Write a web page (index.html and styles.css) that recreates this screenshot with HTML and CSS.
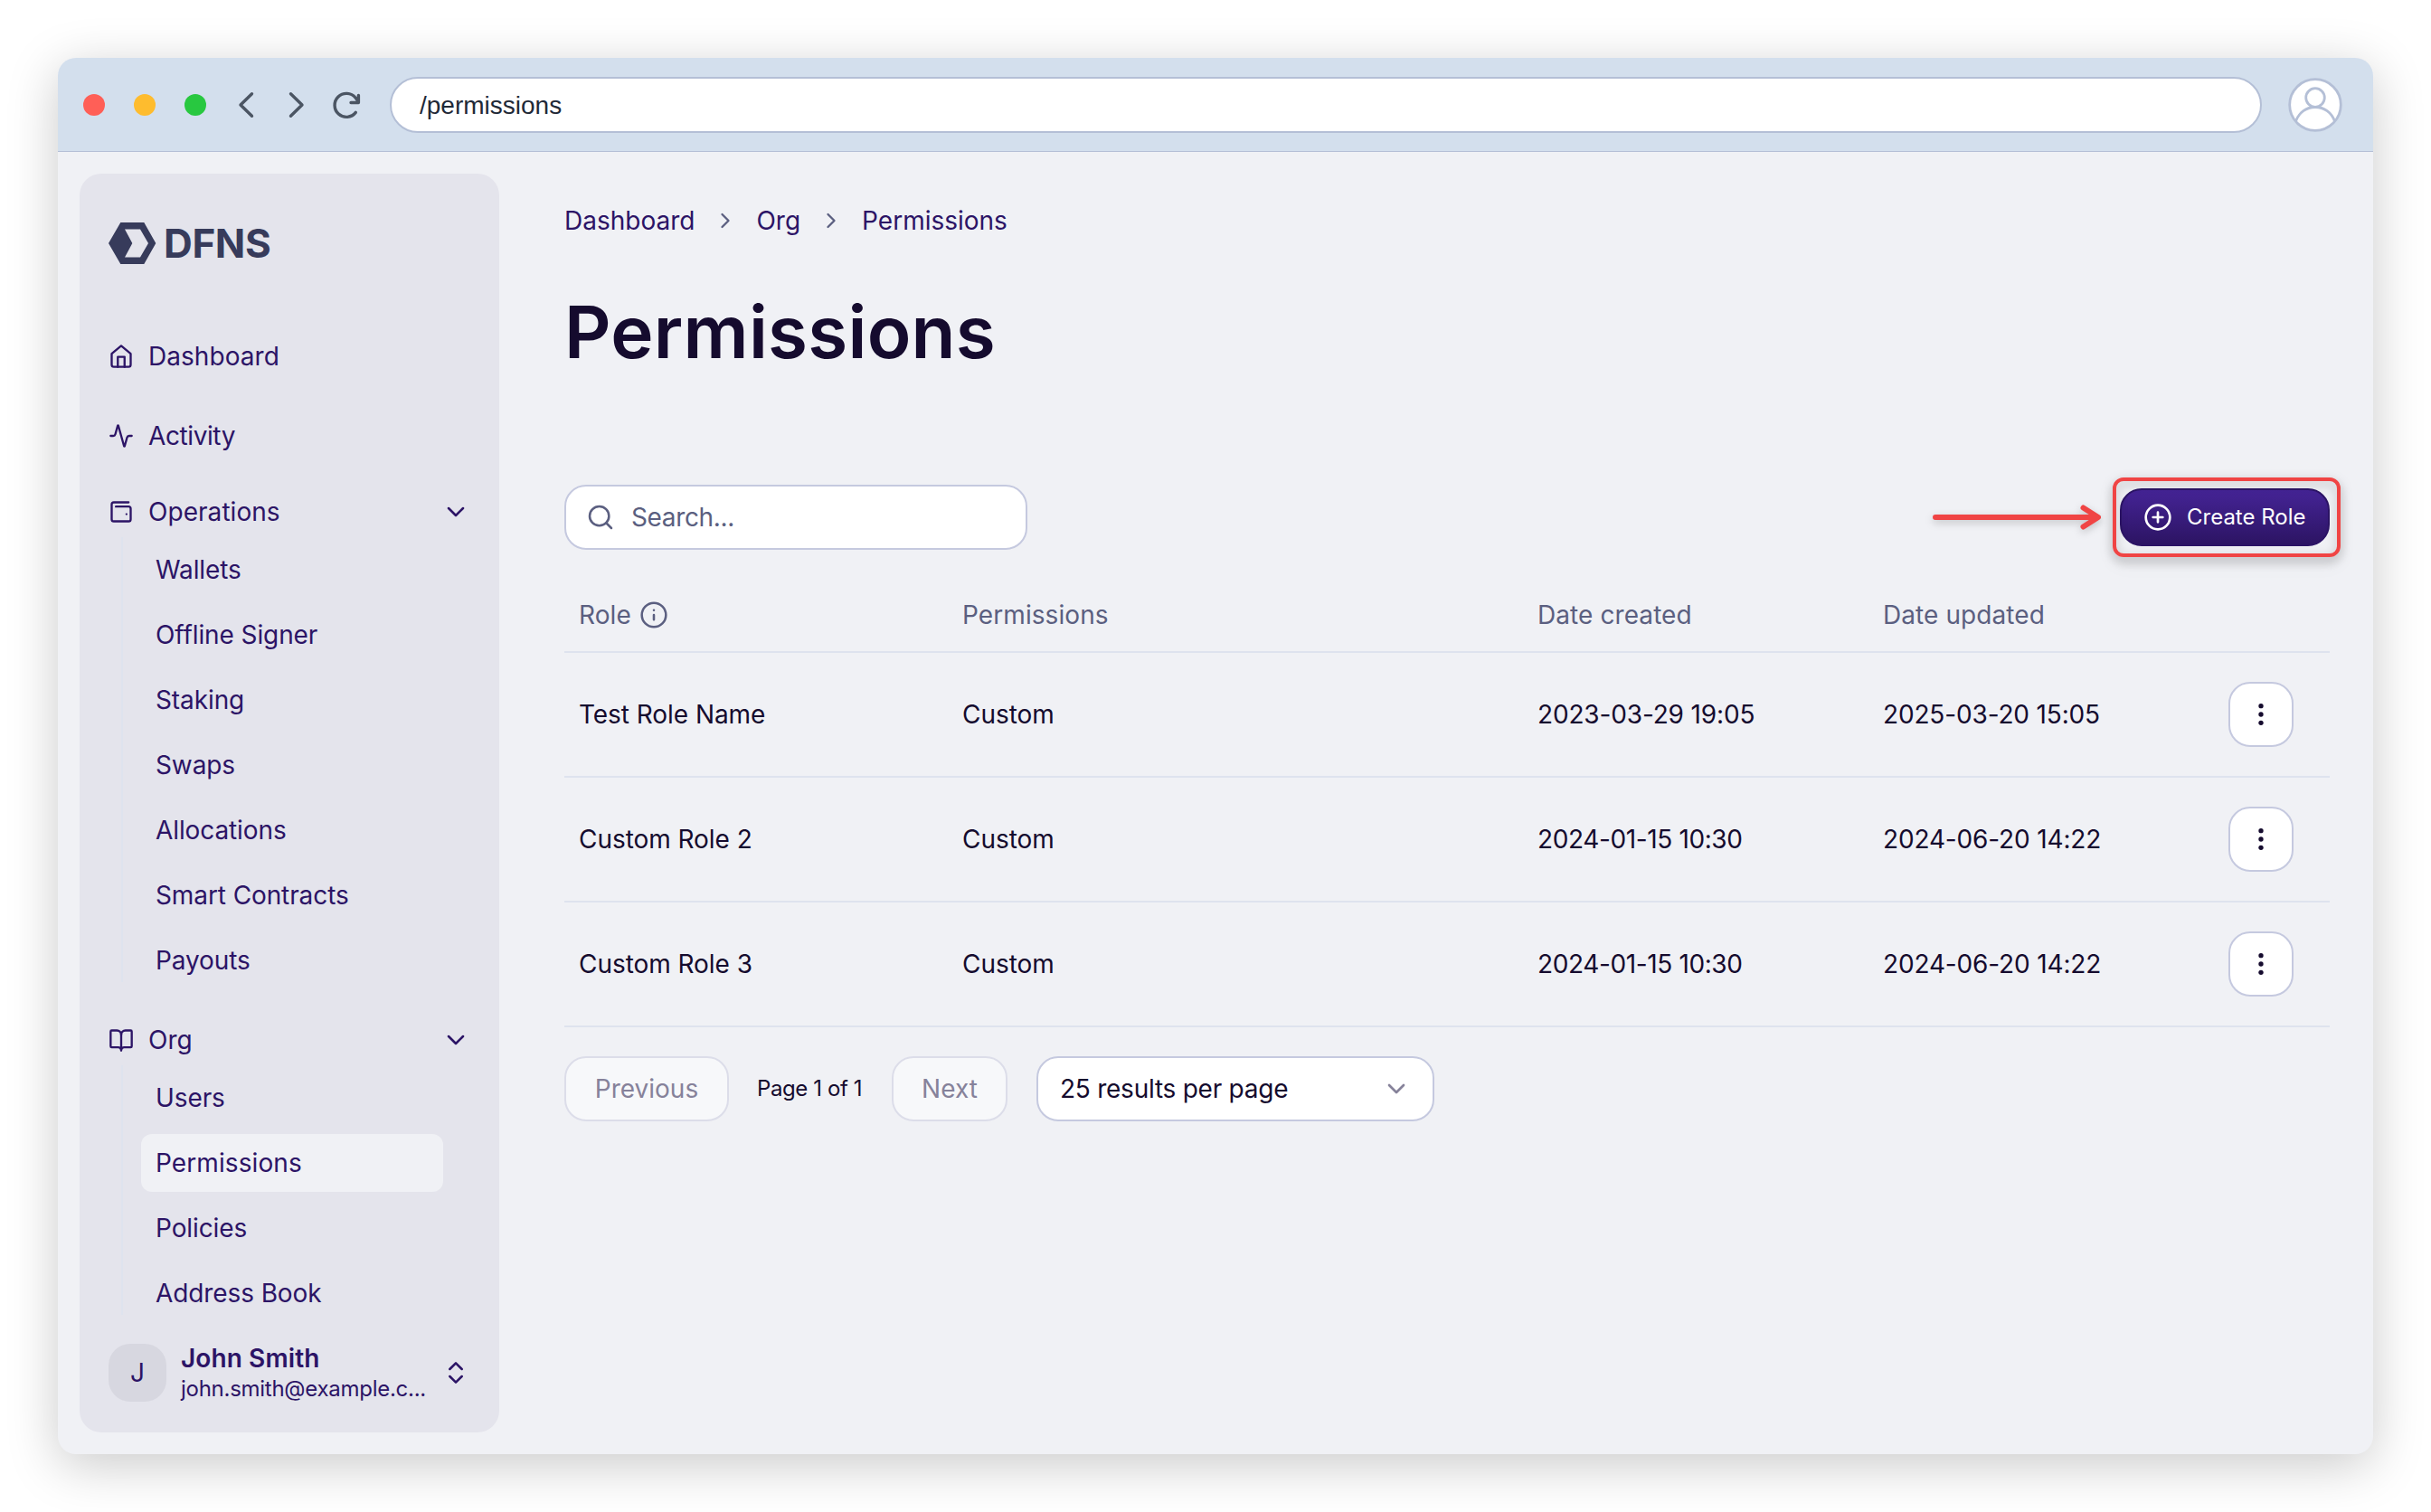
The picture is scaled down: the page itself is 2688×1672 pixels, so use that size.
FILE: index.html
```html
<!DOCTYPE html>
<html lang="en">
<head>
    <meta charset="UTF-8">
    <meta name="viewport" content="width=device-width, initial-scale=1.0">
    <title>Permissions</title>
    <link rel="stylesheet" href="styles.css">
</head>
<body>
    <div class="browser">
        <div class="browser-bar">
            <div class="dots">
                <span class="dot red"></span>
                <span class="dot yellow"></span>
                <span class="dot green"></span>
            </div>
            <div class="nav-icons">
                <svg width="32" height="32" viewBox="0 0 32 32"><path d="M22.500 3.800 10 16l12.500 12.200"/></svg>
                <svg width="32" height="32" viewBox="0 0 32 32"><path d="M9.500 3.800 22 16 9.500 28.200"/></svg>
                <svg width="32" height="32" viewBox="0 0 32 32"><path d="M25.300 24.400A13 13 0 1 1 25 8l3 4M28.400 5.500V13.500H20"/></svg>
            </div>
            <div class="url">/permissions</div>
            <svg class="profile" width="60" height="60" viewBox="0 0 60 60">
                <circle cx="30" cy="30" r="28.300"/>
                <circle cx="30" cy="22" r="10.300"/>
                <path d="M8.500 48C12 38.500 20 32.500 30 32.500S48 38.500 51.500 48"/>
            </svg>
        </div>

        <div class="app">
            <aside class="sidebar">
                <div class="logo">
                    <svg width="53" height="46" viewBox="0 0 53 46">
                        <path fill-rule="evenodd" d="M13.300 0H39.300L52.300 23 39.300 46H13.300L0 23ZM18 7.500 26.300 23 18 38.500H35L44 23 35 7.500Z"/>
                    </svg>
                    <span>DFNS</span>
                </div>

                <nav>
                    <a class="nav-item">
                        <svg class="icon" viewBox="0 0 24 24"><path d="M3 9.500 12 2l9 7.500V20a2 2 0 0 1-2 2H5a2 2 0 0 1-2-2z"/><path d="M8.800 22V12.500h6.400V22"/></svg>
                        Dashboard
                    </a>
                    <a class="nav-item activity">
                        <svg class="icon" viewBox="0 0 24 24"><path d="M22 12h-2.480a2 2 0 0 0-1.930 1.460l-2.350 8.360a.25.25 0 0 1-.48 0L9.240 2.180a.25.25 0 0 0-.48 0l-2.350 8.360A2 2 0 0 1 4.490 12H2"/></svg>
                        Activity
                    </a>
                    <a class="nav-item operations">
                        <svg class="icon" viewBox="0 0 24 24"><path d="M19 3H5a2 2 0 0 0-2 2v14a2 2 0 0 0 2 2h14a2 2 0 0 0 2-2V9a2 2 0 0 0-2-2H7"/><path d="M17 14.200h.01"/></svg>
                        Operations
                        <svg class="chevron" viewBox="0 0 24 24"><path d="m6 9 6 6 6-6"/></svg>
                    </a>
                    <ul class="submenu">
                        <li>Wallets</li>
                        <li>Offline Signer</li>
                        <li>Staking</li>
                        <li>Swaps</li>
                        <li>Allocations</li>
                        <li>Smart Contracts</li>
                        <li>Payouts</li>
                    </ul>
                    <a class="nav-item org">
                        <svg class="icon" viewBox="0 0 24 24"><path d="M12 6v16"/><path d="M3 19a1 1 0 0 1-1-1V4a1 1 0 0 1 1-1h5a4 4 0 0 1 4 4 4 4 0 0 1 4-4h5a1 1 0 0 1 1 1v14a1 1 0 0 1-1 1h-6a3 3 0 0 0-3 2 3 3 0 0 0-3-2z"/></svg>
                        Org
                        <svg class="chevron" viewBox="0 0 24 24"><path d="m6 9 6 6 6-6"/></svg>
                    </a>
                    <ul class="submenu">
                        <li>Users</li>
                        <li class="active">Permissions</li>
                        <li>Policies</li>
                        <li>Address Book</li>
                    </ul>
                </nav>

                <div class="user">
                    <div class="user-avatar">J</div>
                    <div class="user-info">
                        <div class="user-name">John Smith</div>
                        <div class="user-email">john.smith@example.c...</div>
                    </div>
                    <svg class="chevron" viewBox="0 0 24 24"><path d="m7 9 5-5 5 5M7 15l5 5 5-5"/></svg>
                </div>
            </aside>

            <main>
                <div class="breadcrumbs">
                    <span>Dashboard</span>
                    <svg viewBox="0 0 24 24"><path d="m9 18 6-6-6-6"/></svg>
                    <span>Org</span>
                    <svg viewBox="0 0 24 24"><path d="m9 18 6-6-6-6"/></svg>
                    <span>Permissions</span>
                </div>

                <h1>Permissions</h1>

                <div class="toolbar">
                    <div class="search">
                        <svg viewBox="0 0 24 24"><circle cx="11" cy="11" r="8"/><path d="m21 21-4.300-4.300"/></svg>
                        Search...
                    </div>
                    <div class="create">
                        <button class="create-btn">
                            <svg viewBox="0 0 24 24"><circle cx="12" cy="12" r="10"/><path d="M8 12h8M12 8v8"/></svg>
                            Create Role
                        </button>
                        <div class="highlight"></div>
                        <svg class="arrow" width="192" height="32" viewBox="0 0 192 32"><path d="M6 16H184M169.500 5.500 186 16 169.500 26.500"/></svg>
                    </div>
                </div>

                <table>
                    <colgroup>
                        <col class="col-role">
                        <col class="col-permissions">
                        <col class="col-date">
                        <col class="col-date">
                        <col>
                    </colgroup>
                    <thead>
                        <tr>
                            <th><div class="th-role">Role <svg viewBox="0 0 24 24"><circle cx="12" cy="12" r="10"/><path d="M12 16v-4M12 8h.01"/></svg></div></th>
                            <th>Permissions</th>
                            <th>Date created</th>
                            <th>Date updated</th>
                            <th></th>
                        </tr>
                    </thead>
                    <tbody>
                        <tr>
                            <td>Test Role Name</td>
                            <td>Custom</td>
                            <td class="date">2023-03-29 19:05</td>
                            <td class="date">2025-03-20 15:05</td>
                            <td><button class="more"><svg viewBox="0 0 24 24"><circle cx="12" cy="5" r="2"/><circle cx="12" cy="12" r="2"/><circle cx="12" cy="19" r="2"/></svg></button></td>
                        </tr>
                        <tr>
                            <td>Custom Role 2</td>
                            <td>Custom</td>
                            <td class="date tight">2024-01-15 10:30</td>
                            <td class="date">2024-06-20 14:22</td>
                            <td><button class="more"><svg viewBox="0 0 24 24"><circle cx="12" cy="5" r="2"/><circle cx="12" cy="12" r="2"/><circle cx="12" cy="19" r="2"/></svg></button></td>
                        </tr>
                        <tr>
                            <td>Custom Role 3</td>
                            <td>Custom</td>
                            <td class="date tight">2024-01-15 10:30</td>
                            <td class="date">2024-06-20 14:22</td>
                            <td><button class="more"><svg viewBox="0 0 24 24"><circle cx="12" cy="5" r="2"/><circle cx="12" cy="12" r="2"/><circle cx="12" cy="19" r="2"/></svg></button></td>
                        </tr>
                    </tbody>
                </table>

                <div class="pagination">
                    <button class="page-btn prev" disabled>Previous</button>
                    <span class="page-count">Page 1 of 1</span>
                    <button class="page-btn next" disabled>Next</button>
                    <div class="page-size">
                        25 results per page
                        <svg viewBox="0 0 24 24"><path d="m6 9 6 6 6-6"/></svg>
                    </div>
                </div>
            </main>
        </div>
    </div>
</body>
</html>
```

FILE: styles.css
```css
* {
    box-sizing: border-box;
}

body {
    margin: 0;
    padding: 64px;
    background: #fff;
    font-family: Inter, "Liberation Sans", sans-serif;
    font-size: 28px;
    line-height: 40px;
    color: #150b2e;
}

svg {
    fill: none;
    stroke: currentColor;
    stroke-linecap: round;
    stroke-linejoin: round;
    flex-shrink: 0;
}

button {
    font: inherit;
    margin: 0;
}

.browser {
    height: 1544px;
    border-radius: 20px;
    background: #f0f1f5;
    box-shadow: 0 12px 56px rgba(0, 0, 0, 0.21);
    overflow: hidden;
}

/* Browser bar */
.browser-bar {
    display: flex;
    align-items: center;
    height: 104px;
    padding: 0 34px 0 28px;
    background: #d3dfed;
    border-bottom: 1px solid #b4bfd6;
}

.dots {
    display: flex;
    gap: 32px;
}

.dot {
    width: 24px;
    height: 24px;
    border-radius: 50%;
}

.red {
    background: #ff5f57;
}

.yellow {
    background: #febc2e;
}

.green {
    background: #28c840;
}

.nav-icons {
    display: flex;
    gap: 24px;
    margin: 0 31px 0 28px;
    color: #4b5563;
    stroke-width: 3.4;
}

.url {
    flex: 1;
    height: 62px;
    padding-left: 31px;
    border: 2px solid #b4bfd6;
    border-radius: 31px;
    background: #fff;
    color: #1f2937;
    font-family: "Liberation Sans", Arial, sans-serif;
    line-height: 59px;
}

.profile {
    margin-left: 29px;
    color: #b4bfd6;
    fill: #fff;
    stroke-width: 2.8;
    stroke-linecap: butt;
}

.app {
    display: flex;
    gap: 72px;
    padding: 24px 48px 24px 24px;
}

/* Sidebar */
.sidebar {
    display: flex;
    flex-direction: column;
    width: 464px;
    height: 1392px;
    padding: 54px 32px 32px;
    border-radius: 24px;
    background: #e4e4ec;
    color: #2c1466;
}

.logo {
    display: flex;
    align-items: center;
    gap: 8px;
    height: 46px;
    margin-bottom: 70px;
    color: #373b5b;
    font-size: 44px;
    font-weight: 700;
    letter-spacing: -0.4px;
}

.logo svg {
    fill: currentColor;
    stroke: none;
}

.nav-item {
    display: flex;
    align-items: center;
    gap: 16px;
    height: 64px;
    letter-spacing: 0.05px;
}

.icon {
    width: 28px;
    height: 28px;
    stroke-width: 2;
}

.chevron {
    width: 32px;
    height: 32px;
    margin-left: auto;
    stroke-width: 1.9;
}

.activity {
    margin-top: 24px;
    letter-spacing: -0.4px;
}

.operations {
    margin-top: 20px;
}

.org {
    margin-top: 32px;
}

.submenu {
    display: flex;
    flex-direction: column;
    gap: 8px;
    margin: -4px 30px 0 14px;
    padding: 4px 0 0 20px;
    border-left: 2px solid #dee3ee;
    list-style: none;
}

.submenu li {
    height: 64px;
    padding-left: 16px;
    border-radius: 12px;
    line-height: 64px;
    letter-spacing: -0.1px;
}

.submenu li:last-child {
    margin-bottom: -8px;
}

.submenu .active {
    background: #f0f1f5;
    letter-spacing: 0.1px;
}

.user {
    display: flex;
    align-items: center;
    margin-top: 30px;
}

.user-avatar {
    width: 64px;
    height: 64px;
    border-radius: 24px;
    background: #d7d7e0;
    line-height: 64px;
    text-align: center;
}

.user-info {
    margin-left: 16px;
    white-space: nowrap;
}

.user-name {
    font-weight: 600;
    line-height: 36px;
    letter-spacing: 0.1px;
}

.user-email {
    font-size: 24px;
    line-height: 32px;
    letter-spacing: -0.27px;
}

/* Main */
main {
    flex: 1;
    padding-top: 32px;
}

.breadcrumbs {
    display: flex;
    align-items: center;
    gap: 20px;
    color: #2c1466;
    letter-spacing: 0;
}

.breadcrumbs svg {
    width: 28px;
    height: 28px;
    color: #5b5f80;
    stroke-width: 2;
}

h1 {
    margin: 55px 0 121px;
    font-size: 80px;
    font-weight: 600;
    line-height: 96px;
    letter-spacing: 0.25px;
}

.toolbar {
    display: flex;
    align-items: center;
    justify-content: space-between;
}

.search {
    display: flex;
    align-items: center;
    gap: 18px;
    width: 512px;
    height: 72px;
    padding-left: 22px;
    border: 2px solid #c5c9df;
    border-radius: 24px;
    background: #fff;
    color: #5b5f80;
    letter-spacing: -0.35px;
}

.search svg {
    width: 32px;
    height: 32px;
    stroke-width: 1.9;
}

.create {
    position: relative;
}

.create-btn {
    display: flex;
    align-items: center;
    gap: 16px;
    width: 232px;
    height: 64px;
    padding: 0 0 0 24px;
    border: 2px solid #2c1466;
    border-radius: 24px;
    background: linear-gradient(#452496, #2c1463);
    color: #fff;
    font-size: 24px;
    letter-spacing: 0;
}

.create-btn svg {
    width: 32px;
    height: 32px;
    stroke-width: 2;
}

/* Callout around the create button */
.highlight {
    position: absolute;
    inset: -12px -12px -12px -8px;
    border: 4px solid #f04444;
    border-radius: 12px;
    filter: drop-shadow(0 4px 6px rgba(0, 0, 0, 0.25));
    box-shadow: 0 6px 14px rgba(0, 0, 0, 0.1);
}

.arrow {
    position: absolute;
    top: 16px;
    right: 250px;
    overflow: visible;
    color: #f04444;
    stroke-width: 6;
    filter: drop-shadow(0 3px 4px rgba(0, 0, 0, 0.2));
}

table {
    width: 100%;
    margin-top: 32px;
    border-collapse: separate;
    border-spacing: 0;
    table-layout: fixed;
}

.col-role {
    width: 424px;
}

.col-permissions {
    width: 636px;
}

.col-date {
    width: 382px;
}

th,
td {
    padding: 0 0 0 16px;
    border-bottom: 2px solid #dee3ee;
    text-align: left;
    white-space: nowrap;
}

th {
    height: 82px;
    color: #5b5f80;
    font-weight: 400;
    letter-spacing: 0.08px;
}

td {
    height: 138px;
    letter-spacing: -0.05px;
}

.date {
    letter-spacing: -0.15px;
}

.tight {
    letter-spacing: -0.38px;
}

.th-role {
    display: flex;
    align-items: center;
    gap: 9px;
}

.th-role svg {
    width: 32px;
    height: 32px;
    stroke-width: 1.9;
}

.more {
    display: flex;
    align-items: center;
    justify-content: center;
    width: 72px;
    height: 72px;
    padding: 0;
    border: 2px solid #c5c9df;
    border-radius: 24px;
    background: #fff;
    color: #150b2e;
}

.more svg {
    width: 32px;
    height: 32px;
    fill: currentColor;
    stroke: none;
}

.pagination {
    display: flex;
    align-items: center;
    gap: 32px;
    margin-top: 32px;
}

.page-btn {
    height: 72px;
    padding: 0;
    border: 2px solid #dcdde9;
    border-radius: 24px;
    background: #f7f8fa;
    color: #86829a;
}

.prev {
    width: 182px;
}

.next {
    width: 128px;
}

.page-count {
    width: 116px;
    font-size: 24px;
    white-space: nowrap;
    text-indent: -1px;
    letter-spacing: -0.4px;
}

.page-size {
    display: flex;
    align-items: center;
    justify-content: space-between;
    width: 440px;
    height: 72px;
    padding: 0 24px;
    border: 2px solid #c5c9df;
    border-radius: 24px;
    background: #fff;
    letter-spacing: -0.25px;
}

.page-size svg {
    width: 32px;
    height: 32px;
    color: #86829a;
    stroke-width: 2;
}
```
